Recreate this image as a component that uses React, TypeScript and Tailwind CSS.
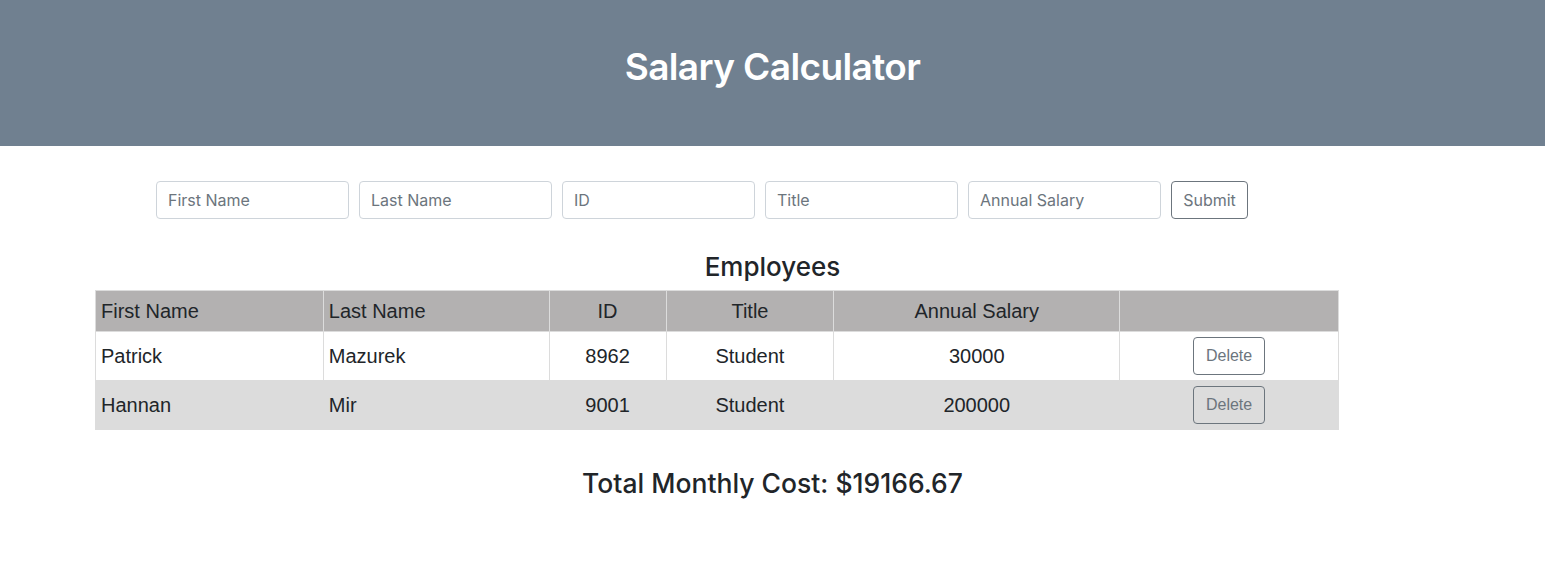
const employees = [
  { first: "Patrick", last: "Mazurek", id: "8962", title: "Student", salary: "30000" },
  { first: "Hannan", last: "Mir", id: "9001", title: "Student", salary: "200000" },
];

const fields = ["First Name", "Last Name", "ID", "Title", "Annual Salary"];

export default function App() {
  return (
    <div className="min-h-[579px] bg-white font-['Inter','Liberation_Sans',sans-serif] text-[#212529]">
      <header className="flex h-[146px] items-center justify-center bg-[#708090] pb-[12px]">
        <h1 className="text-[37px] font-semibold tracking-[-0.6px] text-white">
          Salary Calculator
        </h1>
      </header>

      {/* Input form */}
      <form className="ml-[156px] mt-[35px] flex gap-[10px]">
        {fields.map((f) => (
          <input
            key={f}
            placeholder={f}
            className="h-[38px] w-[193px] rounded-[4px] border border-[#ced4da] px-[11px] text-[16px] text-[#495057] placeholder:text-[#6c757d]"
          />
        ))}
        <button
          type="button"
          className="h-[38px] w-[77px] rounded-[4px] border border-[#6c757d] text-[16px] text-[#6c757d]"
        >
          Submit
        </button>
      </form>

      <h3 className="mt-[31px] text-center text-[26px] font-medium leading-[34px]">Employees</h3>

      <table className="ml-[95px] mt-[6px] w-[1244px] border-collapse font-['Liberation_Sans',Arial,sans-serif] text-[20px] text-[#212529]">
        <thead>
          <tr className="h-[41px] bg-[#b3b1b1]">
            <th className="w-[228px] border border-[#dcdcdc] px-[5px] text-left font-normal">First Name</th>
            <th className="w-[226px] border border-[#dcdcdc] px-[5px] text-left font-normal">Last Name</th>
            <th className="w-[117px] border border-[#dcdcdc] px-[5px] text-center font-normal">ID</th>
            <th className="w-[168px] border border-[#dcdcdc] px-[5px] text-center font-normal">Title</th>
            <th className="w-[286px] border border-[#dcdcdc] px-[5px] text-center font-normal">Annual Salary</th>
            <th className="w-[219px] border border-[#dcdcdc] px-[5px] font-normal"></th>
          </tr>
        </thead>
        <tbody>
          {employees.map((e, i) => (
            <tr key={e.id} className={i % 2 === 1 ? "h-[49px] bg-[#dcdcdc]" : "h-[49px] bg-white"}>
              <td className="border border-[#dcdcdc] px-[5px]">{e.first}</td>
              <td className="border border-[#dcdcdc] px-[5px]">{e.last}</td>
              <td className="border border-[#dcdcdc] px-[5px] text-center">{e.id}</td>
              <td className="border border-[#dcdcdc] px-[5px] text-center">{e.title}</td>
              <td className="border border-[#dcdcdc] px-[5px] text-center">{e.salary}</td>
              <td className="border border-[#dcdcdc] px-[5px] text-center">
                <button
                  type="button"
                  className="h-[38px] w-[72px] rounded-[4px] border border-[#6c757d] text-[16px] text-[#6c757d]"
                >
                  Delete
                </button>
              </td>
            </tr>
          ))}
        </tbody>
      </table>

      <h3 className="mt-[36px] text-center text-[26.5px] font-medium leading-[34px]">
        Total Monthly Cost: $19166.67
      </h3>
    </div>
  );
}
